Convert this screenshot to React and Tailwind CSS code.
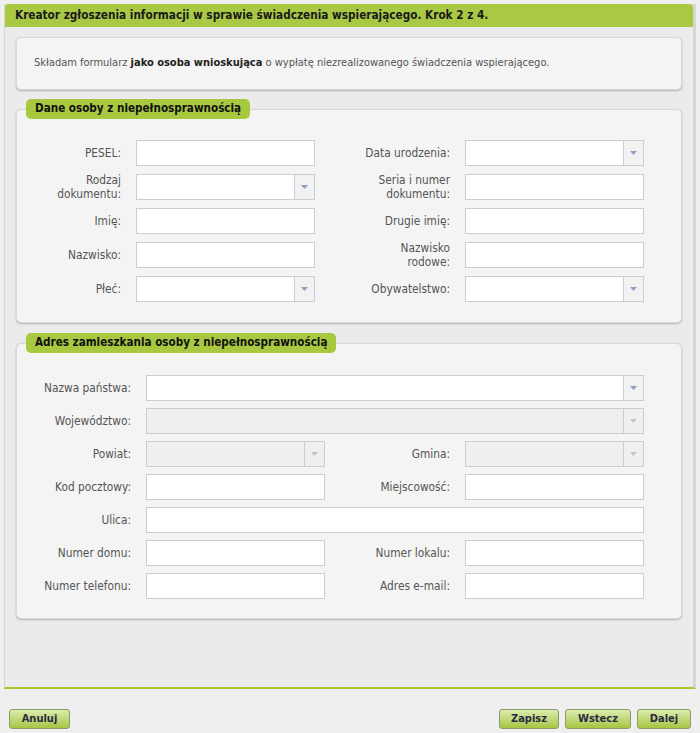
import React from 'react';

const font = { fontFamily: '"DejaVu Sans Condensed", "DejaVu Sans", Verdana, sans-serif' };

function Arrow({ disabled }) {
  return (
    <div className={`absolute right-0 top-0 bottom-0 w-[20px] border-l border-[#c8ced8] flex items-center justify-center ${disabled ? 'bg-[#efefef]' : 'bg-[#f2f2f2]'}`}>
      <svg width="7" height="4" viewBox="0 0 7 4">
        <path d="M0 0 H7 L3.5 4 Z" fill={disabled ? '#c4c4c4' : '#8c9fc4'} />
      </svg>
    </div>
  );
}

function Field({ select, disabled, wide }) {
  return (
    <div className={`relative h-[26px] border border-[#c8ced8] ${disabled ? 'bg-[#efefef]' : 'bg-white'} ${wide ? 'w-[498px]' : 'w-[179px]'}`}>
      {select && <Arrow disabled={disabled} />}
    </div>
  );
}

function Row({ label, labelW, children }) {
  return (
    <div className="flex items-center h-[26px]">
      <div className="text-right text-[#555] text-[11.8px] leading-[14px] pr-[15px]" style={{ width: labelW }}>
        {label}
      </div>
      {children}
    </div>
  );
}

function Fieldset({ title, children, className }) {
  return (
    <div className={`relative mx-[11px] bg-[#f4f4f4] border border-[#d8d8d8] rounded-[5px] shadow-[0_1px_2px_rgba(0,0,0,0.25)] ${className}`}>
      <div className="absolute left-[9px] top-[-11px] h-[20px] bg-[#a8c840] rounded-[5px] px-[9px] flex items-center text-[11.6px] font-bold text-[#111]">
        {title}
      </div>
      {children}
    </div>
  );
}

function Btn({ children, w }) {
  return (
    <button className="h-[20px] rounded-[3px] border border-[#8b9a6a] bg-gradient-to-b from-[#dcecac] to-[#a6c63c] text-[11px] font-bold text-[#2b2b45]" style={{ width: w }}>
      {children}
    </button>
  );
}

export default function App() {
  const L1 = [
    ['PESEL:', false, 'Data urodzenia:', true],
    [<>Rodzaj<br />dokumentu:</>, true, <>Seria i numer<br />dokumentu:</>, false],
    ['Imię:', false, 'Drugie imię:', false],
    ['Nazwisko:', false, <>Nazwisko<br />rodowe:</>, false],
    ['Płeć:', true, 'Obywatelstwo:', true],
  ];

  return (
    <div className="w-[700px] h-[733px] bg-[#efefef] pt-[4px]" style={font}>
      <div className="mx-[4px] h-[685px] bg-[#ebebeb] border-l border-r-[3px] border-[#d6d6d6] border-b-2 border-b-[#a3c92a] flex flex-col">
        <div className="h-[23px] bg-[#a9c944] rounded-t-[3px] px-[10px] flex items-center text-[11.7px] font-bold text-[#1a1a1a]">
          Kreator zgłoszenia informacji w sprawie świadczenia wspierającego. Krok 2 z 4.
        </div>

        <div className="mt-[10px] mx-[11px] h-[53px] bg-[#f4f4f4] border border-[#d8d8d8] rounded-[5px] shadow-[0_1px_2px_rgba(0,0,0,0.25)] flex items-center px-[17px] text-[11px] text-[#555]">
          <span>Składam formularz <b className="text-[#222]">jako osoba wnioskująca</b> o wypłatę niezrealizowanego świadczenia wspierającego.</span>
        </div>

        <Fieldset title="Dane osoby z niepełnosprawnością" className="mt-[19px] h-[214px] pt-[30px]">
          <div className="flex flex-col gap-[8px]">
            {L1.map((r, i) => (
              <div key={i} className="flex">
                <Row label={r[0]} labelW={119}><Field select={r[1]} /></Row>
                <Row label={r[2]} labelW={150}><Field select={r[3]} /></Row>
              </div>
            ))}
          </div>
        </Fieldset>

        <Fieldset title="Adres zamieszkania osoby z niepełnosprawnością" className="mt-[20px] h-[276px] pt-[31px]">
          <div className="flex flex-col gap-[7px]">
            <Row label="Nazwa państwa:" labelW={129}><Field select wide /></Row>
            <Row label="Województwo:" labelW={129}><Field select wide disabled /></Row>
            <div className="flex">
              <Row label="Powiat:" labelW={129}><Field select disabled /></Row>
              <Row label="Gmina:" labelW={140}><Field select disabled /></Row>
            </div>
            <div className="flex">
              <Row label="Kod pocztowy:" labelW={129}><Field /></Row>
              <Row label="Miejscowość:" labelW={140}><Field /></Row>
            </div>
            <Row label="Ulica:" labelW={129}><Field wide /></Row>
            <div className="flex">
              <Row label="Numer domu:" labelW={129}><Field /></Row>
              <Row label="Numer lokalu:" labelW={140}><Field /></Row>
            </div>
            <div className="flex">
              <Row label="Numer telefonu:" labelW={129}><Field /></Row>
              <Row label="Adres e-mail:" labelW={140}><Field /></Row>
            </div>
          </div>
        </Fieldset>
      </div>

      <div className="flex items-center px-[9px] mt-[20px]">
        <Btn w={61}>Anuluj</Btn>
        <div className="flex-1" />
        <div className="flex gap-[6px]">
          <Btn w={60}>Zapisz</Btn>
          <Btn w={66}>Wstecz</Btn>
          <Btn w={54}>Dalej</Btn>
        </div>
      </div>
    </div>
  );
}
